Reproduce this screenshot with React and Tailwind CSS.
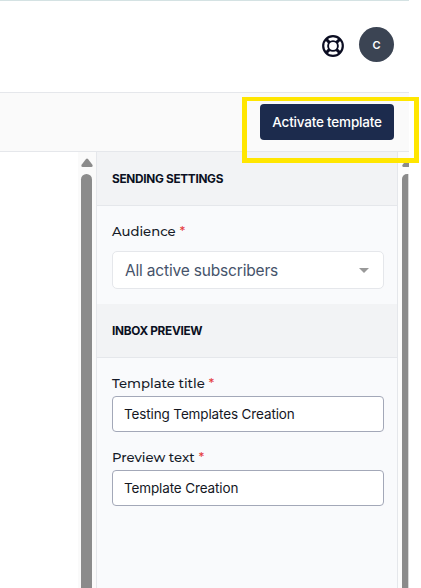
import React from "react";

function LifebuoyIcon() {
  return (
    <svg className="h-6 w-6" viewBox="0 0 24 24" fill="none" stroke="#0b0d22" strokeWidth="2.2">
      <circle cx="12" cy="12" r="9.8" />
      <circle cx="12" cy="12" r="4.9" strokeWidth="1.9" />
      <path strokeWidth="3" d="M5.2 5.2l3.4 3.4M15.4 15.4l3.4 3.4M18.8 5.2l-3.4 3.4M8.6 15.4l-3.4 3.4" />
    </svg>
  );
}

function UpArrow() {
  return (
    <svg className="h-[9px] w-3 shrink-0" viewBox="0 0 12 9" fill="#8b8b8b">
      <path d="M5 1Q6 0 7 1L11.6 7Q12 9 10.5 9H1.5Q0 9 .4 7Z" />
    </svg>
  );
}

function SectionHeader({ children }) {
  return (
    <div className="flex h-[54px] shrink-0 items-center border-b border-[#e5e7eb] bg-[#f2f3f5] pl-[15px] text-[11.8px] font-bold leading-4 text-[#0b1022]">
      <span className="tracking-[-0.3px]">{children}</span>
    </div>
  );
}

function Label({ children }) {
  return (
    <div className="flex h-4 items-center gap-1 text-[13.2px] font-medium leading-4 text-[#151a28]">
      <span className="font-['Montserrat','Inter',sans-serif]">{children}</span>
      <span className="font-['Montserrat','Inter',sans-serif] text-[#e53e3e]">*</span>
    </div>
  );
}

function Field({ value }) {
  return (
    <div className="flex h-9 items-center rounded-[4px] border border-[#a3a8b8] bg-white pl-[11px] text-[13.5px] text-[#15171f]">
      <span className="tracking-[-0.13px]">{value}</span>
    </div>
  );
}

export default function App() {
  return (
    <div className="relative h-[588px] w-[421px] overflow-hidden bg-white font-['Inter',sans-serif]">
      <div className="flex h-full w-[409px] flex-col">
        <header className="flex h-[93px] shrink-0 items-start justify-end gap-[14px] border-b border-t border-b-[#e5e7eb] border-t-[#d4e2e3] pr-[15px]">
          <div className="mt-[33px]">
            <LifebuoyIcon />
          </div>
          <div className="mt-[26px] flex h-[35px] w-[35px] items-center justify-center rounded-full bg-[#3b4453] pt-px text-[11px] font-semibold text-white">
            C
          </div>
        </header>
        <div className="flex h-[59px] shrink-0 items-start justify-end border-b border-[#e5e7eb] bg-[#fafafa] pr-[15px] pt-[11px]">
          <button className="flex h-9 w-[134px] items-center justify-center rounded-[4px] bg-[#1c2b4d] pt-px text-[13.5px] font-medium text-white">
            <span className="whitespace-nowrap tracking-[-0.2px]">Activate template</span>
          </button>
        </div>
        <div className="flex min-h-0 flex-1">
          <div className="w-[78px] shrink-0" />
          <div className="flex w-[18px] shrink-0 flex-col items-center bg-[#fafafa] pr-px pt-[6px]">
            <UpArrow />
            <div className="mt-[7px] w-[11px] flex-1 rounded-t-full bg-[#8b8b8b]" />
          </div>
          <main className="flex w-[302px] shrink-0 flex-col border-x border-[#e5e7eb] bg-[#f9fafc]">
            <SectionHeader>SENDING SETTINGS</SectionHeader>
            <div className="h-[98px] shrink-0 pl-[15px] pr-[13px] pt-[17px]">
              <Label>Audience</Label>
              <div className="mt-3 flex h-[38px] items-center justify-between rounded-[5px] border border-[#e5e7eb] bg-white pl-3 pr-[14px] pt-px text-[15.5px] text-[#46536a]">
                <span className="tracking-[-0.18px]">All active subscribers</span>
                <svg className="h-[5px] w-[10px]" viewBox="0 0 10 5" fill="#999">
                  <path d="M0 0H10L5 5Z" />
                </svg>
              </div>
            </div>
            <SectionHeader>INBOX PREVIEW</SectionHeader>
            <div className="flex flex-col pl-[15px] pr-[13px] pt-[17px]">
              <Label>Template title</Label>
              <div className="mb-[17px] mt-[5px]">
                <Field value="Testing Templates Creation" />
              </div>
              <Label>Preview text</Label>
              <div className="mt-[5px]">
                <Field value="Template Creation" />
              </div>
            </div>
          </main>
          <div className="flex flex-1 flex-col overflow-hidden bg-[#fcfcfc] pl-1 pt-[6px]">
            <UpArrow />
            <div className="mt-[7px] flex-1 rounded-tl-[5px] border-r border-[#d9d9d9] bg-[#8b8b8b]" />
          </div>
        </div>
      </div>
      <div className="absolute left-[242px] top-[97px] h-[66px] w-[177px] border-x-[5px] border-b-[5px] border-t-[4px] border-[#ffe600]" />
    </div>
  );
}
